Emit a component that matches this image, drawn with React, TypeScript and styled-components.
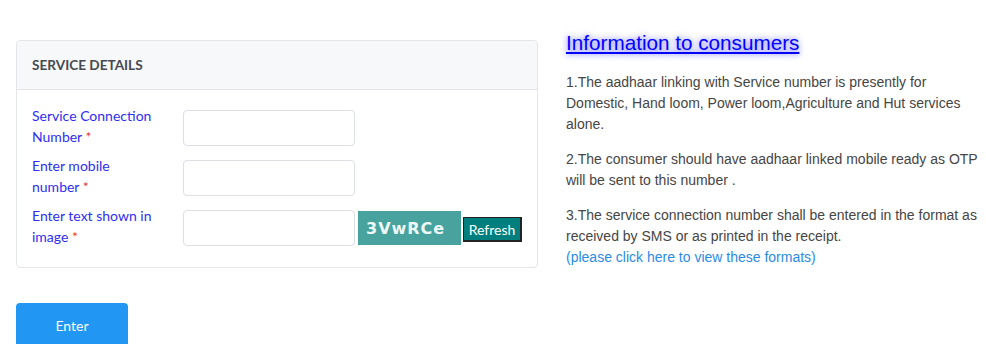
import React from 'react';
import styled, { createGlobalStyle } from 'styled-components';

const GlobalStyle = createGlobalStyle`
  html, body {
    margin: 0;
    padding: 0;
    background: #fff;
  }
  * {
    box-sizing: border-box;
  }
`;

const Page = styled.div`
  display: flex;
  align-items: flex-start;
  gap: 28px;
  padding: 31px 0 0 16px;
  font-family: Lato, 'Open Sans', sans-serif;
`;

const LeftColumn = styled.div`
  width: 522px;
  padding-top: 9px;
`;

const Card = styled.div`
  border: 1px solid #e4e6ea;
  border-radius: 4px;
  background: #fff;
`;

const CardHeader = styled.div`
  height: 49px;
  display: flex;
  align-items: center;
  padding: 0 15px;
  background: #f7f8fa;
  border-bottom: 1px solid #e2e4e8;
  border-radius: 4px 4px 0 0;
  font-size: 13.6px;
  font-weight: 700;
  color: #454a50;
`;

const CardBody = styled.div`
  display: flex;
  flex-direction: column;
  gap: 8px;
  padding: 15px 15px 20px;
`;

const FormRow = styled.div`
  display: flex;
  align-items: flex-start;
  min-height: 42px;

  & > * {
    flex-shrink: 0;
  }
`;

const Label = styled.label`
  width: 151px;
  font-size: 14px;
  line-height: 21px;
  color: #2e2ef2;
`;

const Required = styled.span`
  color: #e53935;
`;

const Input = styled.input`
  width: 172px;
  height: 36px;
  margin-top: 5px;
  border: 1px solid #dcdfe3;
  border-radius: 4px;
  background: #fff;
  outline: none;
`;

const Captcha = styled.div`
  width: 103px;
  height: 34px;
  margin: 6px 0 0 3px;
  display: flex;
  align-items: center;
  padding-left: 8px;
  background: #48a39f;
  color: #eef8f7;
  font-family: 'DejaVu Sans', sans-serif;
  font-weight: 700;
  font-size: 16px;
  letter-spacing: 1px;
`;

const RefreshButton = styled.button`
  width: 59px;
  height: 25px;
  margin: 12px 0 0 2px;
  padding: 0;
  background: #007f7e;
  color: #fff;
  border: 1px solid #222;
  border-right-width: 2px;
  border-bottom-width: 2px;
  font-family: Lato, sans-serif;
  font-size: 14px;
  cursor: pointer;
`;

const EnterButton = styled.button`
  margin-top: 35px;
  width: 112px;
  height: 44px;
  border: none;
  border-radius: 4px;
  background: #2196f3;
  color: #fff;
  font-family: Lato, sans-serif;
  font-size: 14px;
  cursor: pointer;
`;

const InfoColumn = styled.div`
  width: 414px;
  font-family: 'Liberation Sans', Arial, sans-serif;
  color: #454545;
`;

const InfoTitle = styled.a`
  display: block;
  font-size: 20.7px;
  line-height: 23px;
  color: #0000ff;
  text-decoration: underline;
  text-shadow: 0 0 6px #5a5aff;
`;

const InfoText = styled.p`
  margin: 0;
  font-size: 14px;
  line-height: 21px;

  & + & {
    margin-top: 14px;
  }

  &:first-of-type {
    margin-top: 18px;
  }
`;

const FormatLink = styled.a`
  color: #2a8be6;
  text-decoration: none;
`;

const fields = [
  { first: 'Service Connection', second: 'Number' },
  { first: 'Enter mobile', second: 'number' },
];

const App: React.FC = () => {
  return (
    <>
      <GlobalStyle />
      <Page>
        <LeftColumn>
          <Card>
            <CardHeader>SERVICE DETAILS</CardHeader>
            <CardBody>
              {fields.map((field, index) => (
                <FormRow key={index}>
                  <Label>
                    {field.first}
                    <br />
                    {field.second} <Required>*</Required>
                  </Label>
                  <Input type="text" />
                </FormRow>
              ))}
              <FormRow>
                <Label>
                  Enter text shown in
                  <br />
                  image <Required>*</Required>
                </Label>
                <Input type="text" />
                <Captcha>3VwRCe</Captcha>
                <RefreshButton>Refresh</RefreshButton>
              </FormRow>
            </CardBody>
          </Card>
          <EnterButton>Enter</EnterButton>
        </LeftColumn>

        <InfoColumn>
          <InfoTitle href="#">Information to consumers</InfoTitle>
          <InfoText>
            1.The aadhaar linking with Service number is presently for Domestic, Hand loom, Power
            loom,Agriculture and Hut services alone.
          </InfoText>
          <InfoText>
            2.The consumer should have aadhaar linked mobile ready as OTP will be sent to this
            number .
          </InfoText>
          <InfoText>
            3.The service connection number shall be entered in the format as received by SMS or
            as printed in the receipt.
            <br />
            <FormatLink href="#">(please click here to view these formats)</FormatLink>
          </InfoText>
        </InfoColumn>
      </Page>
    </>
  );
};

export default App;
